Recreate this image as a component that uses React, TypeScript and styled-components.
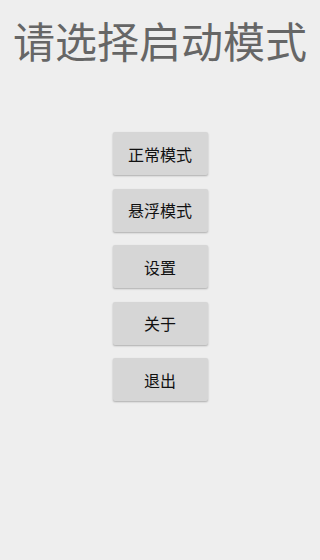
import styled, { createGlobalStyle } from "styled-components";

const GlobalStyle = createGlobalStyle`
  html, body {
    margin: 0;
    padding: 0;
    background: #eeeeee;
  }
  body {
    font-family: "Noto Sans CJK SC", "Noto Sans", sans-serif;
  }
`;

const Screen = styled.div`
  width: 320px;
  height: 560px;
  background: #eeeeee;
  display: flex;
  flex-direction: column;
  align-items: center;
  overflow: hidden;
`;

const Title = styled.h1`
  margin: 10px 0 0;
  font-size: 42px;
  font-weight: 400;
  line-height: 60px;
  color: #666666;
  white-space: nowrap;
`;

const Menu = styled.div`
  margin-top: 62px;
  display: flex;
  flex-direction: column;
  gap: 13.5px;
`;

const MenuButton = styled.button`
  width: 95px;
  height: 43px;
  border: none;
  border-radius: 2px;
  background: #d6d6d6;
  box-shadow: 0 1px 2px rgba(0, 0, 0, 0.28);
  font-family: "Noto Sans CJK SC", sans-serif;
  font-size: 16px;
  font-weight: 400;
  color: #111111;
  padding: 0;
  cursor: pointer;
`;

const items = ["正常模式", "悬浮模式", "设置", "关于", "退出"];

export default function App() {
  return (
    <Screen>
      <GlobalStyle />
      <Title>请选择启动模式</Title>
      <Menu>
        {items.map((label) => (
          <MenuButton key={label}>{label}</MenuButton>
        ))}
      </Menu>
    </Screen>
  );
}
